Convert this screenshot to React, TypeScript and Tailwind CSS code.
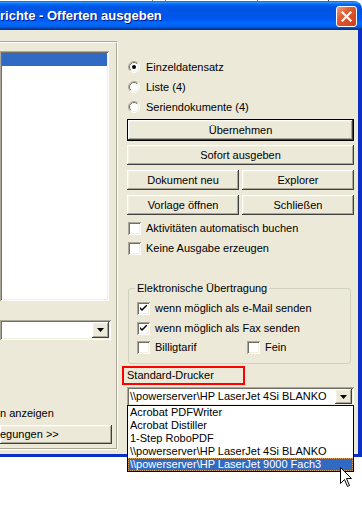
import React from "react";

const FONT = "font-['Liberation_Sans',Arial,sans-serif] text-[11px] leading-[13px] text-black";
const RAISED =
  "bg-[#ECE9D8] shadow-[inset_-1px_-1px_#404040,inset_1px_1px_#ffffff,inset_-2px_-2px_#aca899,inset_2px_2px_#f1efe2]";
const SUNKEN =
  "bg-white shadow-[inset_1px_1px_#aca899,inset_-1px_-1px_#ffffff,inset_2px_2px_#716f64,inset_-2px_-2px_#f1efe2]";

function Check({ checked }: { checked?: boolean }) {
  return (
    <span className={`w-[13px] h-[13px] shrink-0 flex items-center justify-center ${SUNKEN}`}>
      {checked && (
        <svg width="7" height="7" viewBox="0 0 7 7">
          <path d="M0 2 L0 4 L2 6 L7 1 L7 -1 L2 4 Z" fill="#000" />
        </svg>
      )}
    </span>
  );
}

function Radio({ checked }: { checked?: boolean }) {
  return (
    <svg width="12" height="12" viewBox="0 0 12 12" className="shrink-0">
      <defs>
        <linearGradient id="ro" x1="0" y1="0" x2="1" y2="1">
          <stop offset="0.45" stopColor="#aca899" />
          <stop offset="0.55" stopColor="#ffffff" />
        </linearGradient>
        <linearGradient id="ri" x1="0" y1="0" x2="1" y2="1">
          <stop offset="0.45" stopColor="#716f64" />
          <stop offset="0.55" stopColor="#f1efe2" />
        </linearGradient>
      </defs>
      <circle cx="6" cy="6" r="5.5" fill="none" stroke="url(#ro)" strokeWidth="1" />
      <circle cx="6" cy="6" r="4.5" fill="#ffffff" stroke="url(#ri)" strokeWidth="1" />
      {checked && <circle cx="6" cy="6" r="2" fill="#000" />}
    </svg>
  );
}

function Btn({ children, className = "" }: { children: React.ReactNode; className?: string }) {
  return (
    <div className={`flex items-center justify-center ${RAISED} ${className}`}>{children}</div>
  );
}

function Arrow() {
  return (
    <svg width="7" height="4" viewBox="0 0 7 4">
      <path d="M0 0 H7 L3.5 4 Z" fill="#000" />
    </svg>
  );
}

function Combo({ text, className = "" }: { text?: string; className?: string }) {
  return (
    <div className={`flex items-center p-[2px] ${SUNKEN} ${className}`}>
      <span className="flex-1 pl-[1px] whitespace-nowrap overflow-hidden">{text}</span>
      <Btn className="w-[17px] h-full">
        <Arrow />
      </Btn>
    </div>
  );
}

export default function App() {
  return (
    <div className={`w-[362px] h-[510px] bg-white overflow-hidden relative ${FONT}`}>
      <div className="h-[1px] flex">
        <span className="w-[152px]" />
        <span className="w-[1px] bg-[#808080]" />
        <span className="w-[12px]" />
        <span className="w-[1px] bg-[#808080]" />
        <span className="w-[91px]" />
        <span className="w-[1px] bg-[#808080]" />
        <span className="w-[70px]" />
        <span className="w-[1px] bg-[#404040]" />
      </div>

      <div className="w-[362px] flex flex-col">
        {/* title bar */}
        <div className="h-[29px] rounded-tr-[8px] flex items-center justify-between bg-[linear-gradient(to_bottom,#0058ee_0%,#3593ff_4%,#288eff_6%,#127dff_8%,#036ffc_10%,#0262ee_14%,#0057e5_20%,#0054e3_24%,#0055eb_56%,#005bf5_66%,#026afe_76%,#0062ef_86%,#0052d6_92%,#0040ab_94%,#003092_100%)]">
          <span className="text-white font-bold text-[13px] leading-[16px] pt-[1px] whitespace-nowrap [text-shadow:1px_1px_#0a1883]">
            richte - Offerten ausgeben
          </span>
          <div className="w-[21px] h-[21px] mr-[5px] mt-[2px] rounded-[3px] border border-white flex items-center justify-center bg-[linear-gradient(135deg,#f09a7c_0%,#e2582f_40%,#c9401a_100%)]">
            <svg width="11" height="11" viewBox="0 0 11 11">
              <path d="M1.5 1.5 L9.5 9.5 M9.5 1.5 L1.5 9.5" stroke="#fff" strokeWidth="2.2" strokeLinecap="square" />
            </svg>
          </div>
        </div>

        {/* client area */}
        <div className="h-[427px] bg-[#ECE9D8] border-r-4 border-b-[3px] border-[#0b2fc7] flex">
          {/* left panel */}
          <div className="w-[118px] h-[409px] mt-[11px] flex flex-col border-t border-t-[#aca899] border-r border-r-white border-b border-b-white shadow-[inset_0_1px_#ffffff,inset_-1px_0_#aca899,inset_0_-1px_#aca899]">
            <div className={`w-[109px] h-[250px] mt-[9px] p-[2px] ${SUNKEN}`}>
              <div className="h-[13px] bg-[#316ac5]" />
            </div>
            <Combo className="w-[111px] h-[20px] mt-[19px]" />
            <div className="h-[13px] mt-[67px] whitespace-nowrap">n anzeigen</div>
            <Btn className="w-[112px] h-[19px] mt-[5px] !justify-start whitespace-nowrap">
              egungen &gt;&gt;
            </Btn>
          </div>

          {/* right panel */}
          <div className="flex-1 flex flex-col pt-[27px] pl-[9px] pr-[4px] relative">
            {[
              ["Einzeldatensatz", true],
              ["Liste (4)", false],
              ["Seriendokumente (4)", false],
            ].map(([label, on]) => (
              <div key={label as string} className="h-[20px] flex items-center gap-[6px] pl-[1px]">
                <Radio checked={on as boolean} />
                <span>{label}</span>
              </div>
            ))}

            <Btn className="h-[22px] mt-[2px] border border-black">Übernehmen</Btn>
            <Btn className="h-[20px] mt-[4px]">Sofort ausgeben</Btn>
            <div className="flex gap-[3px] mt-[5px]">
              <Btn className="h-[20px] flex-1">Dokument neu</Btn>
              <Btn className="h-[20px] flex-1">Explorer</Btn>
            </div>
            <div className="flex gap-[3px] mt-[5px]">
              <Btn className="h-[20px] flex-1">Vorlage öffnen</Btn>
              <Btn className="h-[20px] flex-1">Schließen</Btn>
            </div>

            <div className="h-[20px] mt-[3px] flex items-center gap-[5px] pl-[1px]">
              <Check />
              <span>Aktivitäten automatisch buchen</span>
            </div>
            <div className="h-[20px] flex items-center gap-[5px] pl-[1px]">
              <Check />
              <span>Keine Ausgabe erzeugen</span>
            </div>

            <fieldset className="mt-[24px] ml-[1px] mr-[3px] h-[82px] border border-[#d0d0bf] rounded-[3px] pl-[8px] pb-[6px]">
              <legend className="-ml-[2px] px-[2px] leading-[13px]">Elektronische Übertragung</legend>
              <div className="h-[20px] mt-[3px] flex items-center gap-[5px]">
                <Check checked />
                <span>wenn möglich als e-Mail senden</span>
              </div>
              <div className="h-[20px] flex items-center gap-[5px]">
                <Check checked />
                <span>wenn möglich als Fax senden</span>
              </div>
              <div className="h-[19px] flex items-center">
                <div className="w-[110px] flex items-center gap-[5px]">
                  <Check />
                  <span>Billigtarif</span>
                </div>
                <div className="flex items-center gap-[5px]">
                  <Check />
                  <span>Fein</span>
                </div>
              </div>
            </fieldset>

            <div className="h-[19px] w-[123px] mt-[2px] -ml-[5px] border-2 border-[#ff0000] flex items-center pl-[3px]">
              Standard-Drucker
            </div>
            <Combo text="\\powerserver\HP LaserJet 4Si BLANKO" className="h-[19px] mt-[2px]" />
          </div>
        </div>
      </div>

      {/* open dropdown list */}
      <div className="absolute left-[127px] top-[405px] w-[227px] border border-black bg-white flex flex-col">
        {[
          "Acrobat PDFWriter",
          "Acrobat Distiller",
          "1-Step RoboPDF",
          "\\\\powerserver\\HP LaserJet 4Si BLANKO",
        ].map((t) => (
          <div key={t} className="h-[13px] pl-[2px] whitespace-nowrap">
            {t}
          </div>
        ))}
        <div className="h-[13px] pl-[1px] whitespace-nowrap bg-[#316ac5] text-white border border-dotted border-[#d8a05a] leading-[11px]">
          \\powerserver\HP LaserJet 9000 Fach3
        </div>
      </div>

      {/* mouse pointer */}
      <svg className="absolute left-[340px] top-[467px]" width="13" height="21" viewBox="0 0 13 21">
        <path d="M0.5 0.5 V16.5 L4.5 12.5 L7.5 19.5 L9.5 18.5 L6.5 11.5 H11.5 Z" fill="#fff" stroke="#000" strokeWidth="1" />
      </svg>
    </div>
  );
}
